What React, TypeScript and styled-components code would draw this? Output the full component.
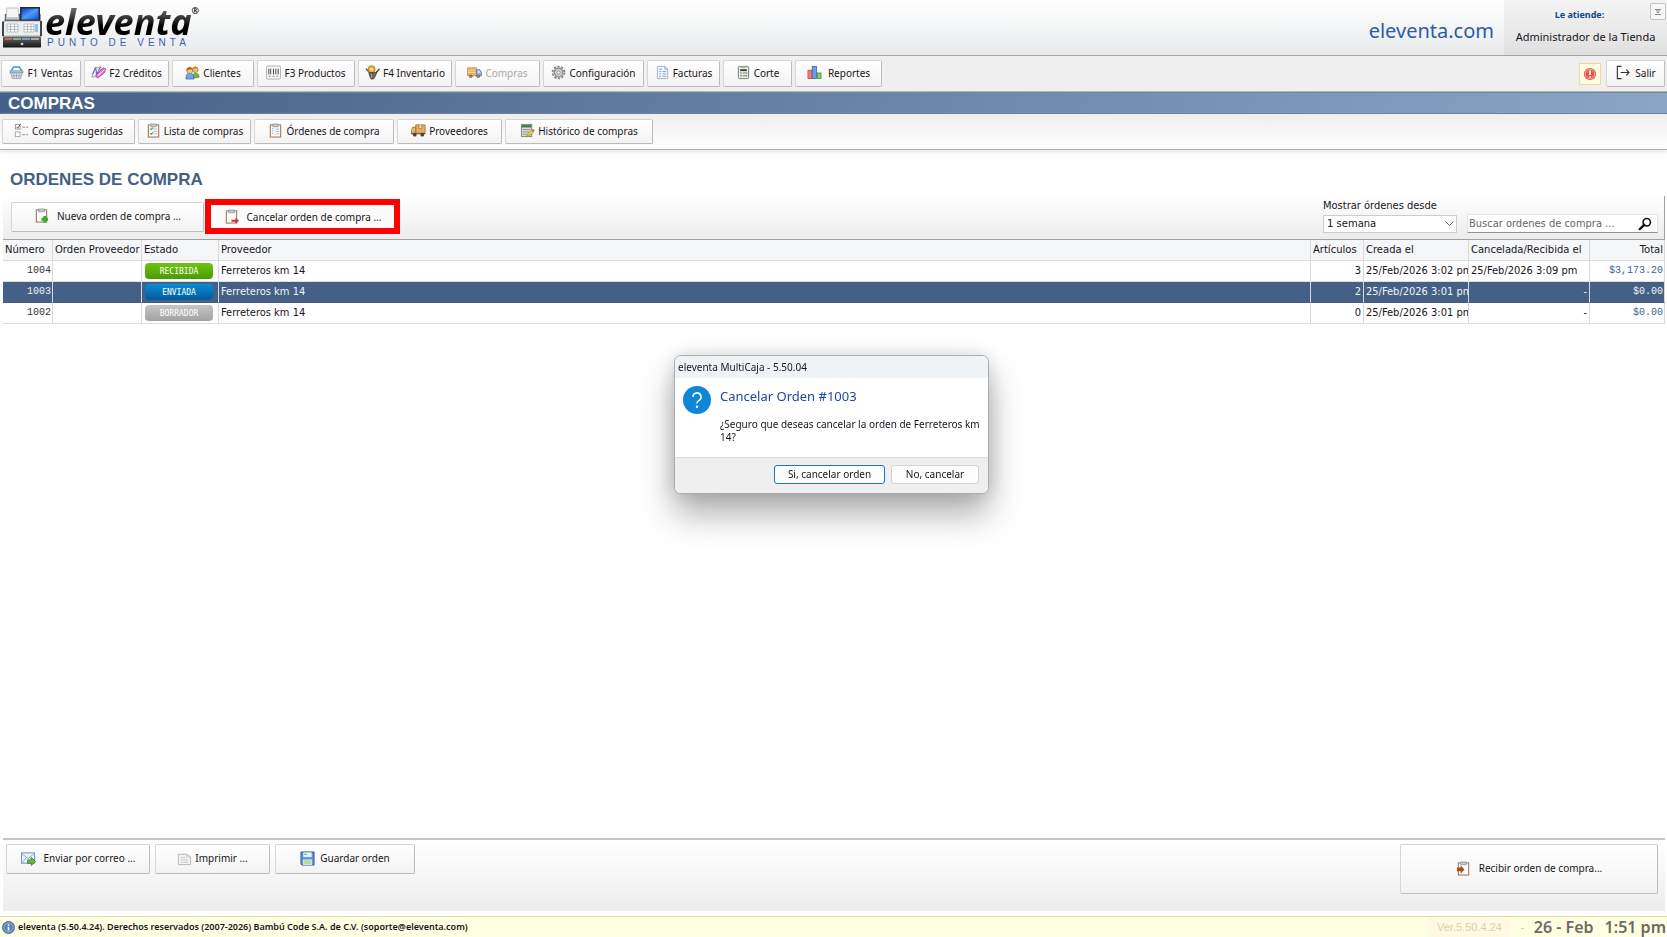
import React from 'react';
import styled, { createGlobalStyle, css } from 'styled-components';

const ui = '"Noto Sans", "Open Sans", sans-serif';
const condensed = '"DejaVu Sans Condensed", "DejaVu Sans", sans-serif';
const grid = '"DejaVu Sans", sans-serif';
const navy = '#446086';

const GlobalStyle = createGlobalStyle`
  * { box-sizing: border-box; }
  body { margin: 0; background: #fff; color: #1a1420; font: 10px/14px ${ui}; }
  button, input, select { font: inherit; color: inherit; }
  h1, h2, p { margin: 0; }
`;

const Page = styled.div`
  display: flex;
  flex-direction: column;
  min-height: 100vh;
`;

/* ---------- header ---------- */

const Header = styled.header`
  display: flex;
  justify-content: space-between;
  height: 56px;
  border-bottom: 1px solid #a3a3a3;
  background: linear-gradient(#fff, #e8eaec);
`;

const Brand = styled.a`
  display: flex;
  gap: 3px;
  padding: 5px 0 0 2px;
  color: inherit;
  text-decoration: none;
`;

const BrandText = styled.span`
  display: flex;
  flex-direction: column;
`;

const BrandName = styled.span`
  display: flex;
  height: 33px;
  font: italic 700 36px/34px ${ui};
  color: transparent;
  background: linear-gradient(#666 15%, #000 65%);
  background-clip: text;
  padding-right: 2px;
`;

const Registered = styled.sup`
  font: 400 9px/12px ${ui};
  color: #333;
`;

const BrandTag = styled.span`
  padding-left: 2px;
  font: 400 10px/10px "Liberation Sans", sans-serif;
  letter-spacing: 4px;
  color: #3f5fa8;
`;

const HeaderRight = styled.div`
  display: flex;
`;

const SiteLink = styled.a`
  padding: 16px 10px 0 0;
  font-size: 20px;
  line-height: 30px;
  color: #2c5ba8;
  text-decoration: none;
`;

const UserBox = styled.div`
  position: relative;
  width: 163px;
  padding-top: 8px;
  text-align: center;
  background: linear-gradient(#f4f4f4, #e0e0e0);
`;

const UserLabel = styled.p`
  padding-right: 12px;
  font-weight: 700;
  font-size: 9px;
  color: #0c4a8c;
`;

const UserName = styled.p`
  padding-top: 7px;
  font-size: 11px;
  line-height: 16px;
`;

const MinimizeButton = styled.button`
  position: absolute;
  top: 3px;
  right: 1px;
  display: grid;
  place-items: center;
  width: 16px;
  height: 17px;
  padding: 0;
  border: 1px solid #c4c4c4;
  border-radius: 2px;
  background: #f6f6f6;
`;

/* ---------- toolbars ---------- */

const Toolbar = styled.nav`
  display: flex;
  align-items: center;
  gap: 3px;
  height: 36px;
  padding: 0 2px 0 1px;
  border-bottom: 1px solid #b5b5b5;
  background: #efefef;
`;

const SubToolbar = styled.nav`
  display: flex;
  gap: 3px;
  height: 36px;
  padding: 5px 2px 0;
  border-bottom: 1px solid #b0b0b0;
  background: linear-gradient(#eee, #fff);
  box-shadow: 0 2px 4px #e6e6e6;
`;

const Button = styled.button<{ $w: number; $h?: number; $gap?: number }>`
  display: flex;
  align-items: center;
  justify-content: center;
  gap: ${(p) => p.$gap ?? 3}px;
  width: ${(p) => p.$w}px;
  height: ${(p) => p.$h ?? 27}px;
  padding: 0 0 2px;
  border: 1px solid #d6d6d6;
  border-right-color: #bcbcbc;
  border-bottom-color: #bcbcbc;
  border-radius: 2px;
  background: linear-gradient(#fff, #f3f3f3);
  white-space: nowrap;
  svg { flex: none; }
  &:disabled { color: #aaa; }
`;

const AlertButton = styled.button`
  display: grid;
  place-items: center;
  width: 22px;
  height: 22px;
  margin: 0 2px 0 auto;
  padding: 0;
  border: 1px solid #ecd9a4;
  background: #fffde0;
`;

const ModuleBar = styled.h1`
  height: 22px;
  padding: 1px 0 0 8px;
  border-top: 1px solid #6f87a6;
  border-bottom: 1px solid #5a7596;
  background: linear-gradient(90deg, ${navy}, #8aa5c6);
  font: 700 17px/20px "Liberation Sans", sans-serif;
  color: #fff;
`;

/* ---------- orders ---------- */

const Main = styled.main`
  display: flex;
  flex: 1;
  flex-direction: column;
  padding: 19px 2px 0 3px;
`;

const SectionTitle = styled.h2`
  padding-left: 7px;
  font: 700 17px/22px "Liberation Sans", sans-serif;
  color: ${navy};
`;

const ActionBar = styled.div`
  display: flex;
  align-items: center;
  height: 44px;
  margin-top: 5px;
  padding: 0 6px 2px 8px;
  border-right: 1px solid #a0a0a0;
  border-bottom: 1px solid #a0a0a0;
  background: linear-gradient(#fff, #ececec);
`;

const Highlight = styled.div`
  height: 35px;
  margin-left: 1px;
  border: 6px solid #fe0000;
  button { border-color: transparent; background: #fbfbfb; padding: 0; }
`;

const Filters = styled.div`
  display: flex;
  align-items: flex-end;
  align-self: flex-end;
  gap: 10px;
  margin-left: auto;
  padding-bottom: 4px;
  font: 11px/14px ${condensed};
`;

const Period = styled.label`
  position: relative;
  display: flex;
  flex-direction: column;
  gap: 2px;
  svg { position: absolute; right: 3px; bottom: 6px; }
`;

const PeriodSelect = styled.select`
  width: 134px;
  height: 18px;
  padding: 0 3px;
  border: 1px solid #ccc;
  appearance: none;
  background: #fff;
  font: 10px/14px ${grid};
`;

const Search = styled.label`
  display: flex;
  align-items: center;
  width: 191px;
  height: 19px;
  padding-right: 5px;
  border: 1px solid #e4e4e4;
  border-bottom-color: #909090;
  background: #fff;
`;

const SearchInput = styled.input`
  flex: 1;
  min-width: 0;
  padding: 0 1px;
  border: 0;
  outline: 0;
  background: none;
  &::placeholder { color: #666; opacity: 1; }
`;

const Table = styled.table`
  width: 100%;
  table-layout: fixed;
  border-collapse: separate;
  border-spacing: 0;
`;

const Col = styled.col<{ $w?: number }>`
  width: ${(p) => (p.$w ? `${p.$w}px` : 'auto')};
`;

const cell = css<{ $right?: boolean }>`
  height: 21px;
  padding: 0 2px;
  overflow: hidden;
  border-right: 1px solid #d9d9d9;
  border-bottom: 1px solid #dedede;
  text-align: ${(p) => (p.$right ? 'right' : 'left')};
  white-space: nowrap;
`;

const Th = styled.th<{ $right?: boolean }>`
  ${cell}
  padding: 0 1px 1px 2px;
  background: #f4f6f8;
  font: 400 10px/14px ${grid};
`;

const Td = styled.td<{ $right?: boolean; $mono?: boolean; $money?: boolean }>`
  ${cell}
  font: 11px/14px ${condensed};
  ${(p) => (p.$mono || p.$money) && css`
    padding-right: 1px;
    font: 400 10px/14px "Liberation Mono", monospace;
    color: ${p.$money ? '#3f5f8c' : '#333'};
  `}
`;

const Tr = styled.tr<{ $selected?: boolean }>`
  ${(p) => p.$selected && css`td { background: ${navy}; color: #f0f4f8; border-bottom-color: ${navy}; }`}
`;

const badgeFill = {
  RECIBIDA: 'linear-gradient(#6fc410, #4a9a04)',
  ENVIADA: 'linear-gradient(#0a8fd4, #02599c)',
  BORRADOR: 'linear-gradient(#c6c6c6, #a2a2a2)',
};
type Status = keyof typeof badgeFill;

const Badge = styled.span<{ $status: Status }>`
  display: block;
  width: 68px;
  height: 16px;
  margin-left: 1px;
  border-radius: 4px;
  background: ${(p) => badgeFill[p.$status]};
  font: 8px/17px "DejaVu Sans Mono", monospace;
  text-align: center;
  color: #fff;
`;

const BottomPanel = styled.div`
  display: flex;
  gap: 5px;
  height: 73px;
  margin: auto 0 5px;
  padding: 4px 7px 0 3px;
  border-top: 2px solid #c9c3bc;
  background: linear-gradient(#fff, #ededed);
`;

const Push = styled.div`
  margin-left: auto;
`;

/* ---------- status bar ---------- */

const StatusBar = styled.footer`
  display: flex;
  align-items: center;
  height: 21px;
  padding-left: 2px;
  border-top: 1px solid #dcdca8;
  background: #ffffe1;
`;

const Copyright = styled.span`
  padding-left: 3px;
  font: 600 9px/14px ${ui};
`;

const Version = styled.span`
  margin-left: auto;
  padding: 0 9px;
  background: #fff9e2;
  font: 11px/20px "Liberation Sans", sans-serif;
  color: #d9d2a6;
`;

const Dash = styled.span`
  width: 23px;
  text-align: center;
  color: #c9c29a;
`;

const Clock = styled.time`
  display: flex;
  gap: 11px;
  padding-right: 1px;
  font: 600 16px/20px ${ui};
  color: #6b6b64;
`;

/* ---------- dialog ---------- */

const DialogLayer = styled.div`
  position: fixed;
  inset: 0;
  display: flex;
  align-items: center;
  justify-content: center;
  padding: 0 4px 89px 0;
`;

const Dialog = styled.section`
  width: 315px;
  border: 1px solid #a9adb0;
  border-radius: 7px;
  overflow: hidden;
  background: #fff;
  box-shadow: 0 20px 34px rgba(0, 0, 0, 0.32), 0 0 18px rgba(0, 0, 0, 0.14);
`;

const DialogBar = styled.header`
  padding: 4px 3px;
  background: #eff3f6;
`;

const DialogBody = styled.div`
  display: flex;
  gap: 9px;
  min-height: 79px;
  padding: 8px 8px 0;
  svg { flex: none; }
`;

const DialogTitle = styled.h2`
  font: 400 13px/20px ${ui};
  color: #1c4aa0;
`;

const DialogText = styled.p`
  padding-top: 12px;
  line-height: 13px;
`;

const DialogFooter = styled.footer`
  display: flex;
  justify-content: flex-end;
  gap: 6px;
  padding: 7px 9px 9px;
  border-top: 1px solid #dcdcdc;
  background: #efefef;
`;

const DialogButton = styled.button<{ $w: number; $primary?: boolean }>`
  width: ${(p) => p.$w}px;
  height: 19px;
  padding: 0;
  border: 1px solid ${(p) => (p.$primary ? '#1a78c2' : '#d2d2d2')};
  border-radius: 3px;
  background: #fdfdfd;
  line-height: 14px;
`;

/* ---------- icons ---------- */

const art: Record<string, React.ReactNode> = {
  basket: (
    <>
      <path d="M2 7 5 2h6l3 5" fill="none" stroke="#4a90c4" strokeWidth="1.6" />
      <path d="M1 6h14v2.500H1z" fill="#a9c4d6" stroke="#6d8ea3" strokeWidth=".6" />
      <path d="M2 8.500h12l-1.500 6h-9z" fill="#e2e7ea" stroke="#8b979f" strokeWidth=".8" />
      <path d="M5 9l.6 5M8 9v5M11 9l-.6 5M3 11.500h10" stroke="#96a4ad" strokeWidth=".9" />
    </>
  ),
  credit: (
    <>
      <path d="M1 13 4 3l7-1-3 10z" fill="#e4e6fa" stroke="#8c8cd0" strokeWidth=".8" />
      <path d="M1.500 10 5 3l1 7 4-8" fill="none" stroke="#5b5bb0" />
      <path d="M5 11 13 3l2.500 1-1 4L7 14z" fill="#ea72c6" stroke="#a43c92" strokeWidth=".8" />
      <path d="M7 11.500 14.500 5" stroke="#fff" />
    </>
  ),
  people: (
    <>
      <path d="M8 14c0-4 1-5 3.500-5s3.500 1 3.500 4z" fill="#7cb342" stroke="#4d7d20" strokeWidth=".7" />
      <circle cx="11" cy="5" r="3" fill="#f0c08a" stroke="#8a5a20" strokeWidth=".6" />
      <path d="M8 4.500c0-3.500 6-3.500 6 0L12.500 3.500z" fill="#c98a20" />
      <path d="M1 15c0-5 1-6 4-6s4.500 1 4.500 6z" fill="#6aa6e0" stroke="#2d64a4" strokeWidth=".7" />
      <circle cx="5" cy="6" r="3.200" fill="#f4c898" stroke="#8a5a20" strokeWidth=".6" />
      <path d="M1.600 6c0-5 6.800-5 6.800 0L6.500 4.200z" fill="#a86418" />
    </>
  ),
  barcode: (
    <>
      <rect x=".5" y="1" width="15" height="14" rx="1.500" fill="#f4f4f4" stroke="#b0b0b0" />
      <path d="M3 4v6M5 4v6M8 4v6M10.500 4v6M13 4v6" stroke="#444" strokeWidth="1" />
      <path d="M3 12h2M7 12h2M11 12h2" stroke="#888" />
    </>
  ),
  inventory: (
    <>
      <path d="M1 4 5 8M15.500 4 11 9" stroke="#5c5148" strokeWidth="1.400" />
      <circle cx="7" cy="4.500" r="3.800" fill="#f2ae3c" stroke="#a86a14" strokeWidth=".8" />
      <circle cx="7" cy="4.500" r="1.300" fill="#fff0c8" />
      <path d="M4 8h7l2-1-2 5-2 3H6.500L5 12z" fill="#6c6258" stroke="#403830" strokeWidth=".7" />
      <path d="M7 9.500v4" stroke="#b4aaa0" />
    </>
  ),
  truck: (
    <>
      <path d="M.5 3h9.500v8.500H.5z" fill="#f4b05c" stroke="#c08438" strokeWidth=".8" />
      <path d="M1 5.500h9M1 8h9" stroke="#fbd596" />
      <path d="M10 5h3.500l2 3v3.500H10z" fill="#8fb2d4" stroke="#4c749c" strokeWidth=".8" />
      <path d="M11.500 6.200h1.600l1.200 2h-2.800z" fill="#e4f2fc" />
      <circle cx="4" cy="12" r="1.800" fill="#666" />
      <circle cx="12" cy="12" r="1.800" fill="#666" />
      <path d="M3.500 12h1M11.500 12h1" stroke="#eee" />
    </>
  ),
  gear: (
    <>
      <circle cx="8" cy="8" r="6.300" fill="none" stroke="#888" strokeWidth="2" strokeDasharray="2.500 1.450" />
      <circle cx="8" cy="8" r="4.500" fill="#dadada" stroke="#8c8c8c" strokeWidth="1.500" />
      <circle cx="8" cy="8" r="1.800" fill="#fff" stroke="#808080" />
    </>
  ),
  invoice: (
    <>
      <path d="M2.500 1.500h8l3 3v10h-11z" fill="#f2f7fb" stroke="#9aabba" strokeWidth=".9" />
      <path d="M10.500 1.500v3h3" fill="none" stroke="#9aabba" />
      <path d="M4.500 4.500h3M4.500 7h2M8 7h4M4.500 9.500h2M8 9.500h4M4.500 12h2M8 12h4" stroke="#7ea2c6" />
    </>
  ),
  calc: (
    <>
      <rect x="2.500" y="1.500" width="11" height="13" rx="1" fill="#eceeea" stroke="#6f7b70" />
      <path d="M5 1h6v2H5z" fill="#9ca69e" />
      <path d="M4.500 5.500h7" stroke="#30402f" strokeWidth="2" />
      <path d="M4.500 8.500h2M7.500 8.500h2M4.500 11.500h2M7.500 11.500h2" stroke="#8d9a8e" strokeWidth="1.500" />
      <path d="M10 8.500h2" stroke="#4caf50" strokeWidth="1.500" />
      <path d="M10 11.500h2" stroke="#d9453a" strokeWidth="1.500" />
    </>
  ),
  chart: (
    <>
      <rect x="1" y="5.500" width="4" height="9" fill="#ee8078" stroke="#c8443c" strokeWidth=".8" />
      <rect x="5.500" y="1.500" width="4.500" height="13" fill="#6c9fe6" stroke="#2a5cb0" strokeWidth=".8" />
      <rect x="11" y="8.500" width="4" height="6" fill="#8ccc78" stroke="#3e8a30" strokeWidth=".8" />
    </>
  ),
  exit: (
    <path d="M7 1.500H2.500v13H7M6 8h9M12 5l3 3-3 3" fill="none" stroke="#333" strokeWidth="1.200" />
  ),
  alert: (
    <>
      <circle cx="8" cy="8" r="7" fill="#e4594c" />
      <circle cx="8" cy="8" r="5.400" fill="none" stroke="#f6b4a8" />
      <path d="M8 4v5M8 10.500v1.800" stroke="#fff" strokeWidth="2" />
    </>
  ),
  checklist: (
    <>
      <rect x="1.500" y="1.500" width="5" height="5" fill="#fff" stroke="#999" />
      <path d="M2.500 4 4 5.500 7 1" fill="none" stroke="#555" />
      <rect x="1.500" y="9.500" width="5" height="5" fill="#fff" stroke="#aaa" />
      <path d="M9 4.500h3M13 4.500h2M9 12.500h3M13 12.500h2" stroke="#888" />
    </>
  ),
  archive: (
    <>
      <rect x="1.500" y="1.500" width="11" height="13" fill="#d8dcd6" stroke="#7c867c" />
      <path d="M2 3.500h10" stroke="#3f7a48" strokeWidth="2.500" />
      <path d="M3 7h8M3 9.500h7M3 12h4" stroke="#8a948a" />
      <path d="M7 14.500l1-3 4.500-4 2 2-4.500 4z" fill="#f0c860" stroke="#a07820" strokeWidth=".7" />
      <path d="M12.500 7.500l2 2 1.200-1.500-1.700-1.500z" fill="#e05040" />
    </>
  ),
  supplier: (
    <>
      <path d="M5 2h10v9H5z" fill="#e8ae62" stroke="#9c6a24" strokeWidth=".8" />
      <path d="M8.500 2v4h3V2" fill="#f9dcae" stroke="#9c6a24" strokeWidth=".7" />
      <path d="M.5 11.500V7L2 4.500h3v7z" fill="#efb23a" stroke="#946410" strokeWidth=".8" />
      <path d="M1.500 7 2.500 5.500H4V8H1.500z" fill="#a4cdf0" />
      <path d="M.5 11.500h15" stroke="#6c4a18" />
      <circle cx="4" cy="12.500" r="2" fill="#444" />
      <circle cx="12" cy="12.500" r="2" fill="#444" />
    </>
  ),
  mail: (
    <>
      <rect x=".5" y="2" width="14" height="11" fill="#eaf3fb" stroke="#5f8fc0" />
      <path d="M1 3l6.500 5L14 3M1 12.500 5.500 7.500M14 12.500l-4-5" fill="none" stroke="#7ea8d0" />
      <path d="M7 9.500h4V7l4.500 4-4.500 4.500V13H7z" fill="#6cb840" stroke="#3a7a18" strokeWidth=".8" />
    </>
  ),
  print: (
    <>
      <path d="M1.500 3.500h9l4 3v8h-13z" fill="#f4f4f4" stroke="#b4b4b4" />
      <path d="M10.500 3.500v3h4M4 7h5M4 9.500h8M4 12h8" fill="none" stroke="#c4c4c4" />
    </>
  ),
  save: (
    <>
      <path d="M1 1h14v14H2l-1-1z" fill="#5b93d6" stroke="#2c5c9c" />
      <rect x="3.500" y="1.500" width="9" height="5" fill="#e8f2fc" />
      <path d="M4.500 3.500h3" stroke="#5b93d6" />
      <rect x="3.500" y="9.500" width="9" height="5" fill="#b6dc98" stroke="#e6f0fa" strokeWidth=".8" />
    </>
  ),
  search: (
    <>
      <circle cx="10" cy="6" r="4.200" fill="none" stroke="#111" strokeWidth="1.800" />
      <path d="M7 9 2 14" stroke="#111" strokeWidth="2.800" strokeLinecap="round" />
    </>
  ),
  info: (
    <>
      <circle cx="8" cy="8" r="7.400" fill="#5583b8" stroke="#39608e" />
      <circle cx="8" cy="8" r="5.600" fill="none" stroke="#a4c2e2" />
      <path d="M8 7v5M8 4v1.800" stroke="#fff" strokeWidth="2" />
    </>
  ),
};

const boardMark: Record<string, React.ReactNode> = {
  list: <path d="M4.500 6l1 1 2-2M4.500 11l1 1 2-2" fill="none" stroke="#3c9a3c" strokeWidth="1.200" />,
  lines: <path d="M4.500 6h1M4.500 8.500h1M4.500 11h1" stroke="#4a9ad0" />,
  add: <path d="M11.500 8.500v7M8 12h7" stroke="#2fae3a" strokeWidth="3" />,
  remove: <path d="M8 12.500h7.500M13 10v5" stroke="#cc2e34" strokeWidth="2" />,
  receive: <path d="M1 7h4V4.500L9 9l-4 4.500V11H1z" fill="#a4501c" />,
};

const Icon = ({ name, size = 15 }: { name: string; size?: number }) => (
  <svg width={size} height={size} viewBox="0 0 16 16" aria-hidden="true">{art[name]}</svg>
);

const BoardIcon = ({ mark }: { mark: keyof typeof boardMark }) => (
  <svg width="15" height="15" viewBox="0 0 16 16" aria-hidden="true">
    <rect x="2.500" y="2" width="11" height="13" fill="#fbfbfb" stroke="#a87c60" strokeWidth="1.200" />
    <path d="M5 1h6v3H5z" fill="#c4c8cc" stroke="#868c92" strokeWidth=".7" />
    {(mark === 'list' || mark === 'lines') && (
      <path d="M8 6.500h4M8 9h4M8 11.500h4" stroke="#a9b2ba" strokeWidth=".9" />
    )}
    {boardMark[mark]}
  </svg>
);

const RegisterLogo = () => (
  <svg width="40" height="43" viewBox="0 0 40 43" aria-hidden="true">
    <defs>
      <linearGradient id="screen" x2="1" y2="1">
        <stop offset="0" stopColor="#0a3fc4" />
        <stop offset=".5" stopColor="#4f9af6" />
        <stop offset="1" stopColor="#1552d8" />
      </linearGradient>
      <linearGradient id="drawer" x2="0" y2="1">
        <stop offset="0" stopColor="#6c6c6c" />
        <stop offset="1" stopColor="#151515" />
      </linearGradient>
    </defs>
    <path d="M3 9 2 30h36.500V9z" fill="#3b3d40" />
    <path d="M3 10h16v6H3z" fill="#55585c" />
    <path d="M5 3h11l1 11H4z" fill="#f5f5f5" stroke="#a9a9a9" strokeWidth=".7" />
    <path d="M4 12h13v2.500H4z" fill="#c4c6c8" />
    <rect x="18" y="2" width="20" height="14" fill="#222a38" />
    <rect x="19.500" y="3.500" width="17" height="11" fill="url(#screen)" />
    <path d="M2 16h37l1 15H0z" fill="#eceeef" stroke="#8a8d90" strokeWidth=".7" />
    <path d="M1 16.500V31M39 16v15" stroke="#222" strokeWidth="1.600" />
    <path d="M5 19h11v8H5zM22 19h10v8H22z" fill="#fff" stroke="#a7abaf" strokeWidth=".7" />
    <path d="M5 21.700h11M5 24.400h11M8.500 19v8M12.500 19v8M22 21.700h10M22 24.400h10M25.500 19v8M29 19v8" stroke="#a7abaf" strokeWidth=".8" />
    <path d="M33 19h3v8h-3z" fill="#8ec3ea" />
    <path d="M1 31.500h38V42q0 .5-1 .5H2q-1 0-1-.5z" fill="url(#drawer)" />
    <path d="M3 34h7" stroke="#c86a50" strokeWidth="2" />
    <path d="M11 34h8" stroke="#8aa884" strokeWidth="2" />
    <path d="M20 34h8" stroke="#6aa0d0" strokeWidth="2" />
    <path d="M29 34h8" stroke="#aaa" strokeWidth="2" />
    <circle cx="20" cy="39" r="1.300" fill="#d8d8d8" />
  </svg>
);

/* ---------- data ---------- */

const modules = [
  { icon: 'basket', label: 'F1 Ventas', w: 80 },
  { icon: 'credit', label: 'F2 Créditos', w: 85 },
  { icon: 'people', label: 'Clientes', w: 82 },
  { icon: 'barcode', label: 'F3 Productos', w: 98 },
  { icon: 'inventory', label: 'F4 Inventario', w: 94 },
  { icon: 'truck', label: 'Compras', w: 85, disabled: true },
  { icon: 'gear', label: 'Configuración', w: 101 },
  { icon: 'invoice', label: 'Facturas', w: 73 },
  { icon: 'calc', label: 'Corte', w: 69 },
  { icon: 'chart', label: 'Reportes', w: 87, gap: 6 },
];

const orders: { id: number; status: Status; items: number; created: string; closed: string; total: string }[] = [
  { id: 1004, status: 'RECIBIDA', items: 3, created: '25/Feb/2026 3:02 pm', closed: '25/Feb/2026 3:09 pm', total: '$3,173.20' },
  { id: 1003, status: 'ENVIADA', items: 2, created: '25/Feb/2026 3:01 pm', closed: '-', total: '$0.00' },
  { id: 1002, status: 'BORRADOR', items: 0, created: '25/Feb/2026 3:01 pm', closed: '-', total: '$0.00' },
];

export default function App() {
  return (
    <Page>
      <GlobalStyle />
      <Header>
        <Brand href="#inicio">
          <RegisterLogo />
          <BrandText>
            <BrandName>eleventa<Registered>®</Registered></BrandName>
            <BrandTag>PUNTO DE VENTA</BrandTag>
          </BrandText>
        </Brand>
        <HeaderRight>
          <SiteLink href="#sitio">eleventa.com</SiteLink>
          <UserBox>
            <UserLabel>Le atiende:</UserLabel>
            <UserName>Administrador de la Tienda</UserName>
            <MinimizeButton aria-label="Minimizar">
              <svg width="8" height="8" viewBox="0 0 8 8" aria-hidden="true">
                <path d="M1 1.500h6M2 3h4M3 4.500h2M1 6.500h6" stroke="#888" />
              </svg>
            </MinimizeButton>
          </UserBox>
        </HeaderRight>
      </Header>

      <Toolbar aria-label="Módulos">
        {modules.map((m) => (
          <Button key={m.label} $w={m.w} $gap={m.gap} disabled={m.disabled}>
            <Icon name={m.icon} />{m.label}
          </Button>
        ))}
        <AlertButton aria-label="Avisos"><Icon name="alert" size={14} /></AlertButton>
        <Button $w={59} $gap={5}><Icon name="exit" />Salir</Button>
      </Toolbar>

      <ModuleBar>COMPRAS</ModuleBar>

      <SubToolbar aria-label="Compras">
        <Button $w={133} $h={25}><Icon name="checklist" />Compras sugeridas</Button>
        <Button $w={113} $h={25}><BoardIcon mark="list" />Lista de compras</Button>
        <Button $w={140} $h={25}><BoardIcon mark="lines" />Órdenes de compra</Button>
        <Button $w={105} $h={25}><Icon name="supplier" />Proveedores</Button>
        <Button $w={148} $h={25}><Icon name="archive" />Histórico de compras</Button>
      </SubToolbar>

      <Main>
        <SectionTitle>ORDENES DE COMPRA</SectionTitle>
        <ActionBar>
          <Button $w={193} $h={30} $gap={8}><BoardIcon mark="add" />Nueva orden de compra ...</Button>
          <Highlight>
            <Button $w={183} $h={23} $gap={8}><BoardIcon mark="remove" />Cancelar orden de compra ...</Button>
          </Highlight>
          <Filters>
            <Period>
              Mostrar órdenes desde
              <PeriodSelect defaultValue="1 semana"><option>1 semana</option></PeriodSelect>
              <svg width="9" height="6" viewBox="0 0 9 6" aria-hidden="true">
                <path d="M.5.5l4 4 4-4" fill="none" stroke="#666" />
              </svg>
            </Period>
            <Search>
              <SearchInput aria-label="Buscar ordenes de compra" placeholder="Buscar ordenes de compra ..." />
              <Icon name="search" size={14} />
            </Search>
          </Filters>
        </ActionBar>

        <Table>
          <colgroup>
            <Col $w={50} /><Col $w={89} /><Col $w={77} /><Col />
            <Col $w={53} /><Col $w={105} /><Col $w={121} /><Col $w={75} />
          </colgroup>
          <thead>
            <tr>
              <Th>Número</Th><Th>Orden Proveedor</Th><Th>Estado</Th><Th>Proveedor</Th>
              <Th>Artículos</Th><Th>Creada el</Th><Th>Cancelada/Recibida el</Th><Th $right>Total</Th>
            </tr>
          </thead>
          <tbody>
            {orders.map((o) => (
              <Tr key={o.id} $selected={o.id === 1003}>
                <Td $right $mono>{o.id}</Td>
                <Td />
                <Td><Badge $status={o.status}>{o.status}</Badge></Td>
                <Td>Ferreteros km 14</Td>
                <Td $right>{o.items}</Td>
                <Td>{o.created}</Td>
                <Td $right={o.closed === '-'}>{o.closed}</Td>
                <Td $right $money>{o.total}</Td>
              </Tr>
            ))}
          </tbody>
        </Table>

        <BottomPanel>
          <Button $w={144} $h={30} $gap={8}><Icon name="mail" />Enviar por correo ...</Button>
          <Button $w={115} $h={30}><Icon name="print" />Imprimir ...</Button>
          <Button $w={140} $h={30} $gap={5}><Icon name="save" />Guardar orden</Button>
          <Push>
            <Button $w={258} $h={50} $gap={8}><BoardIcon mark="receive" />Recibir orden de compra...</Button>
          </Push>
        </BottomPanel>
      </Main>

      <StatusBar>
        <Icon name="info" size={13} />
        <Copyright>eleventa (5.50.4.24). Derechos reservados (2007-2026) Bambú Code S.A. de C.V. (soporte@eleventa.com)</Copyright>
        <Version>Ver.5.50.4.24</Version>
        <Dash>-</Dash>
        <Clock dateTime="2026-02-26T13:51"><span>26 - Feb</span><span>1:51 pm</span></Clock>
      </StatusBar>

      <DialogLayer>
        <Dialog role="dialog" aria-labelledby="dialog-title">
          <DialogBar>eleventa MultiCaja - 5.50.04</DialogBar>
          <DialogBody>
            <svg width="28" height="28" viewBox="0 0 28 28" aria-hidden="true">
              <circle cx="14" cy="14" r="14" fill="#0f86d8" />
              <path d="M10 11a4 4 0 1 1 6 3.400c-1.500.9-2 1.500-2 3.100" fill="none" stroke="#fff" strokeWidth="1.600" />
              <circle cx="14" cy="20.800" r="1.200" fill="#fff" />
            </svg>
            <div>
              <DialogTitle id="dialog-title">Cancelar Orden #1003</DialogTitle>
              <DialogText>¿Seguro que deseas cancelar la orden de Ferreteros km 14?</DialogText>
            </div>
          </DialogBody>
          <DialogFooter>
            <DialogButton $w={111} $primary>Si, cancelar orden</DialogButton>
            <DialogButton $w={88}>No, cancelar</DialogButton>
          </DialogFooter>
        </Dialog>
      </DialogLayer>
    </Page>
  );
}
